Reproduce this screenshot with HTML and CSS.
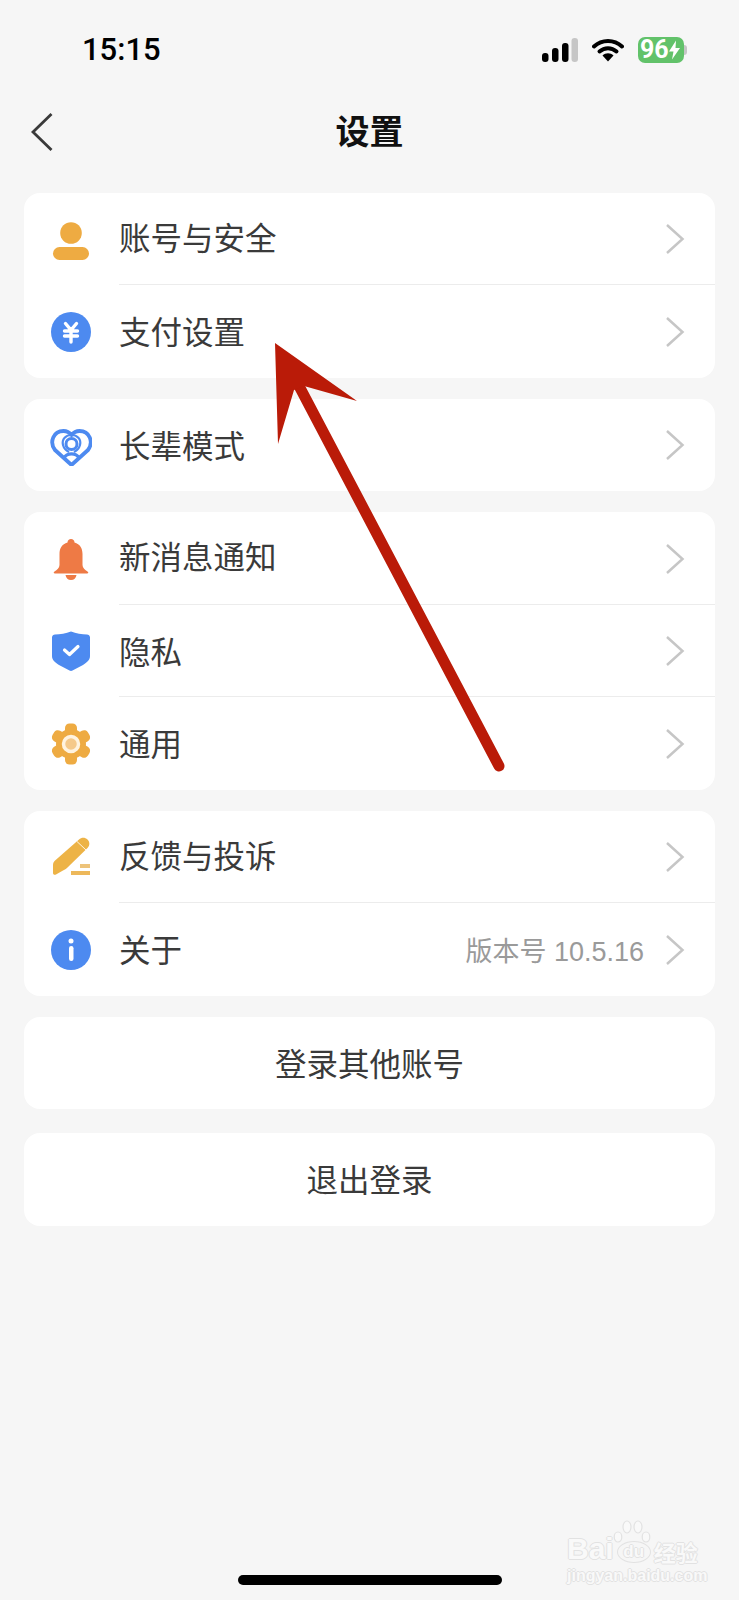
FILE: index.html
```html
<!DOCTYPE html>
<html>
	<head>
		<title>设置</title>
		<link rel="stylesheet" href="styles.css">
	</head>
	<body>
		<div class="page">
			<div class="status">
				<span class="time">15:15</span>
				<div class="status_icons">
					<svg width="36" height="24" viewBox="0 0 36 24">
						<rect x="0" y="15" width="6.500" height="9" rx="3" fill="#000"/>
						<rect x="10" y="10" width="6.500" height="14" rx="3" fill="#000"/>
						<rect x="20" y="5" width="6.500" height="19" rx="3" fill="#000"/>
						<rect x="29.500" y="0" width="6.500" height="24" rx="3" fill="#c6c6c6"/>
					</svg>
					<svg width="32" height="24" viewBox="0 0 32 24">
						<path d="M2 8.500C10 1 22 1 30 8.500" fill="none" stroke="#000" stroke-width="4" stroke-linecap="round"/>
						<path d="M7.500 13.500C12.500 9 19.500 9 24.500 13.500" fill="none" stroke="#000" stroke-width="4" stroke-linecap="round"/>
						<path d="M10.500 17.500C13.500 14.500 18.500 14.500 21.500 17.500L16 23.500Z" fill="#000"/>
					</svg>
					<div class="battery">
						<span>96</span>
						<svg width="11" height="20" viewBox="0 0 11 19"><path d="M7 0L0 11H4.500L3 19L11 7.500H6.500Z" fill="#fff"/></svg>
					</div>
				</div>
			</div>
			<div class="nav">
				<svg class="back" width="22" height="38" viewBox="0 0 22 38"><path d="M20.500 1L2 19L20.500 37" fill="none" stroke="#3a3a3a" stroke-width="2.800"/></svg>
				<div class="nav_title">设置</div>
				<div></div>
			</div>
			<div class="list">
				<div class="card">
					<div class="row">
						<svg class="icon" viewBox="0 0 42 42">
							<circle cx="21" cy="15" r="10.800" fill="#eeab42"/>
							<rect x="3" y="29" width="36" height="13" rx="6.500" fill="#eeab42"/>
						</svg>
						<div class="row_body"><span class="label up">账号与安全</span><svg class="chev" viewBox="0 0 20 32"><path d="M2 2L17.500 16L2 30" /></svg></div>
					</div>
					<div class="row">
						<svg class="icon" viewBox="0 0 42 42">
							<circle cx="21" cy="21" r="20" fill="#4d8af0"/>
							<path d="M15.500 12.500L21 19L26.500 12.500M14.500 20H27.500M14.500 25H27.500M21 19V31" fill="none" stroke="#fff" stroke-width="3.400" stroke-linecap="round"/>
						</svg>
						<div class="row_body line"><span class="label">支付设置</span><svg class="chev" viewBox="0 0 20 32"><path d="M2 2L17.500 16L2 30" /></svg></div>
					</div>
				</div>
				<div class="card">
					<div class="row">
						<svg class="icon" viewBox="0 0 42 42">
							<path d="M21.500 41L5 26C-1 18 3.500 7 13.500 7C17 7 19.500 8.500 21.500 11C23.500 8.500 26 7 29.500 7C39.500 7 44 18 38 26Z" fill="none" stroke="#4d8af0" stroke-width="3.800" stroke-linejoin="round"/>
							<circle cx="21.500" cy="20" r="5.500" fill="none" stroke="#4d8af0" stroke-width="3"/>
							<path d="M21.500 11C16 11 11.500 15 13 21C13.800 24 16 26.500 19 28M21.500 11C27 11 31.500 15 30 21C29.200 24 27 26.500 24 28" fill="none" stroke="#4d8af0" stroke-width="2.200"/>
							<path d="M14 34C17 28.500 26 28.500 29 34" fill="none" stroke="#4d8af0" stroke-width="3.200"/>
						</svg>
						<div class="row_body"><span class="label">长辈模式</span><svg class="chev" viewBox="0 0 20 32"><path d="M2 2L17.500 16L2 30" /></svg></div>
					</div>
				</div>
				<div class="card">
					<div class="row">
						<svg class="icon" viewBox="0 0 42 42">
							<path d="M21 1C23 1 24.500 2.500 24.500 4.500C30 6 32.500 10.500 32.500 16V27C32.500 30 35 32 37.500 33.500C38.800 34.300 38.500 35.500 37 35.500H5C3.500 35.500 3.200 34.300 4.500 33.500C7 32 9.500 30 9.500 27V16C9.500 10.500 12 6 17.500 4.500C17.500 2.500 19 1 21 1Z" fill="#ee7a45"/>
							<path d="M15.500 37H26.500C26 40 24 42 21 42C18 42 16 40 15.500 37Z" fill="#ee7a45"/>
						</svg>
						<div class="row_body"><span class="label up">新消息通知</span><svg class="chev" viewBox="0 0 20 32"><path d="M2 2L17.500 16L2 30" /></svg></div>
					</div>
					<div class="row">
						<svg class="icon" viewBox="0 0 42 42">
							<path d="M21 1.500C26 3.500 32 4.500 37 4.500C38.500 4.500 40 5.500 40 7.500V26C40 30 37 32.500 33 35L22.500 40.500C21.500 41 20.500 41 19.500 40.500L9 35C5 32.500 2 30 2 26V7.500C2 5.500 3.500 4.500 5 4.500C10 4.500 16 3.500 21 1.500Z" fill="#4d8af0"/>
							<path d="M14.500 20L19.500 24.500L28 16.500" fill="none" stroke="#fff" stroke-width="3.200" stroke-linecap="round" stroke-linejoin="round"/>
						</svg>
						<div class="row_body line"><span class="label">隐私</span><svg class="chev" viewBox="0 0 20 32"><path d="M2 2L17.500 16L2 30" /></svg></div>
					</div>
					<div class="row">
						<svg class="icon" viewBox="0 0 42 42">
							<g fill="#eeab42">
								<circle cx="21" cy="21" r="15"/>
								<rect x="15" y="0.500" width="12" height="41" rx="4.500"/>
								<rect x="15" y="0.500" width="12" height="41" rx="4.500" transform="rotate(60 21 21)"/>
								<rect x="15" y="0.500" width="12" height="41" rx="4.500" transform="rotate(120 21 21)"/>
							</g>
							<circle cx="21" cy="21" r="7.500" fill="#f5c98a" stroke="#fff3df" stroke-width="3.500"/>
						</svg>
						<div class="row_body line"><span class="label">通用</span><svg class="chev" viewBox="0 0 20 32"><path d="M2 2L17.500 16L2 30" /></svg></div>
					</div>
				</div>
				<div class="card">
					<div class="row">
						<svg class="icon" viewBox="0 0 42 42">
							<path d="M29 3.500C31.500 1 35 1 37.500 3.500C40 6 40 9.500 37.500 12L18 31C16.800 32.500 15 33.500 13 34.500L6 38.500C4.500 39.300 3 38.500 3 37V29.500C3 27.500 3.500 26 4.800 24.800Z" fill="#edb346"/>
							<path d="M27 5.500L36 14" stroke="#fff6e5" stroke-width="1" fill="none"/>
							<rect x="30" y="28" width="10" height="4" fill="#edc37a"/>
							<rect x="21" y="35" width="19" height="4" fill="#edb85a"/>
						</svg>
						<div class="row_body"><span class="label up">反馈与投诉</span><svg class="chev" viewBox="0 0 20 32"><path d="M2 2L17.500 16L2 30" /></svg></div>
					</div>
					<div class="row">
						<svg class="icon" viewBox="0 0 42 42">
							<circle cx="21" cy="21" r="20" fill="#4d8af0"/>
							<circle cx="21" cy="12" r="2.500" fill="#fff"/>
							<rect x="19" y="17" width="4.500" height="15" rx="2.200" fill="#fff"/>
						</svg>
						<div class="row_body line"><span class="label">关于</span><span class="value">版本号 10.5.16</span><svg class="chev" viewBox="0 0 20 32"><path d="M2 2L17.500 16L2 30" /></svg></div>
					</div>
				</div>
				<div class="card btn">登录其他账号</div>
				<div class="card btn logout">退出登录</div>
			</div>
			<div class="home_bar"></div>
			<!-- baidu mark, sits on top of the page -->
			<div class="mark">
				<svg class="paw" width="38" height="26" viewBox="0 0 38 26">
					<g fill="#f9f9f9" stroke="#e2e2e2" stroke-width="1.200">
						<ellipse cx="5" cy="17" rx="3.800" ry="5"/>
						<ellipse cx="14" cy="7" rx="4" ry="6"/>
						<ellipse cx="25" cy="7" rx="4" ry="6"/>
						<ellipse cx="33" cy="17" rx="3.800" ry="5"/>
					</g>
				</svg>
				<div class="mark_top"><span>Bai</span><span class="mark_du">du</span><span class="mark_cn">经验</span></div>
				<div class="mark_url">jingyan.baidu.com</div>
			</div>
			<svg class="arrow" width="739" height="1600" viewBox="0 0 739 1600">
				<line x1="499" y1="766" x2="298" y2="384" stroke="#ba1b08" stroke-width="11" stroke-linecap="round"/>
				<polygon points="275,343 357,401 304,386 294,390 278,444" fill="#ba1b08"/>
			</svg>
		</div>
	</body>
</html>
```

FILE: styles.css
```css
*{
	box-sizing: border-box;
}
body{
	margin: 0;
	background-color: #f6f6f6;
	font-family: "Noto Sans CJK SC", "Liberation Sans", sans-serif;
	color: #3a3a3a;
}
.page{
	position: relative;
	height: 1600px;
	display: flex;
	flex-direction: column;
	overflow: hidden;
}
.status{
	height: 99px;
	display: flex;
	align-items: center;
	justify-content: space-between;
	padding: 0 55px 0 82px;
}
.time{
	font-family: Roboto, sans-serif;
	font-size: 31px;
	font-weight: 500;
	color: #000;
}
.status_icons{
	display: flex;
	align-items: center;
	gap: 14px;
}
.battery{
	position: relative;
	width: 46px;
	height: 26px;
	border-radius: 7px;
	background-color: #62c26a;
	display: flex;
	align-items: center;
	padding-left: 2px;
}
.battery span{
	font-family: Roboto, sans-serif;
	font-size: 25px;
	line-height: 26px;
	font-weight: 700;
	color: #fff;
}
.battery:after{
	content: "";
	position: absolute;
	right: -3px;
	top: 8px;
	width: 3px;
	height: 10px;
	border-radius: 0 3px 3px 0;
	background-color: #c6c6c6;
}
.nav{
	height: 62px;
	display: grid;
	grid-template-columns: 1fr auto 1fr;
	align-items: center;
	padding-left: 31px;
}
.nav_title{
	font-size: 34px;
	font-weight: 700;
	color: #111;
	line-height: 62px;
	margin-left: -31px;
	padding-bottom: 4px;
}
.list{
	padding: 31.900px 24px 0 24px;
	display: flex;
	flex-direction: column;
	gap: 21px;
}
.card{
	background-color: #fff;
	border-radius: 16px;
}
.row{
	height: 92.500px;
	display: flex;
	align-items: center;
	padding-left: 26px;
}
.icon{
	width: 42px;
	height: 42px;
	flex: none;
	margin-right: 27px;
}
.row_body{
	position: relative;
	flex: 1;
	height: 100%;
	display: flex;
	align-items: center;
}
.line:before{
	content: "";
	position: absolute;
	left: 0;
	right: 0;
	top: -1px;
	height: 1px;
	background-color: #ececec;
}
.label{
	font-size: 31.500px;
	line-height: 40px;
	flex: 1;
	margin-bottom: 3px;
}
.up{
	margin-bottom: 7px;
}
.value{
	font-family: "Liberation Sans", "Noto Sans CJK SC", sans-serif;
	font-size: 27px;
	color: #9a9a9a;
	margin-right: 21px;
}
.chev{
	width: 20px;
	height: 32px;
	margin-right: 30px;
	flex: none;
}
.chev path{
	fill: none;
	stroke: #c6c6c6;
	stroke-width: 2.500;
}
.btn{
	height: 92.500px;
	line-height: 90px;
	text-align: center;
	font-size: 31.500px;
}
.logout{
	margin-top: 3px;
}
.home_bar{
	width: 264px;
	height: 10px;
	border-radius: 5px;
	background-color: #000;
	margin: auto 0 15px 238px;
}
.mark{
	position: absolute;
	left: 567px;
	top: 1520px;
	width: 140px;
	color: #f9f9f9;
	font-family: "Liberation Sans", sans-serif;
	text-shadow: -1px 0 #e2e2e2, 1px 0 #e2e2e2, 0 -1px #e2e2e2, 0 1px #e2e2e2;
}
.paw{
	position: absolute;
	left: 46px;
	top: 0;
}
.mark_top{
	display: flex;
	align-items: flex-end;
	font-size: 30px;
	font-weight: 700;
	line-height: 30px;
	height: 44px;
}
.mark_du{
	width: 34px;
	height: 22px;
	margin-left: 3px;
	margin-bottom: 1px;
	border: 1px solid #e2e2e2;
	border-radius: 50%;
	font-size: 17px;
	line-height: 20px;
	text-align: center;
}
.mark_cn{
	font-family: "Noto Sans CJK SC", sans-serif;
	font-size: 22px;
	line-height: 26px;
	margin-left: 3px;
}
.mark_url{
	font-size: 16px;
	font-weight: 700;
	line-height: 18px;
	margin-top: 3px;
}
.arrow{
	position: absolute;
	left: 0;
	top: 0;
}
```
